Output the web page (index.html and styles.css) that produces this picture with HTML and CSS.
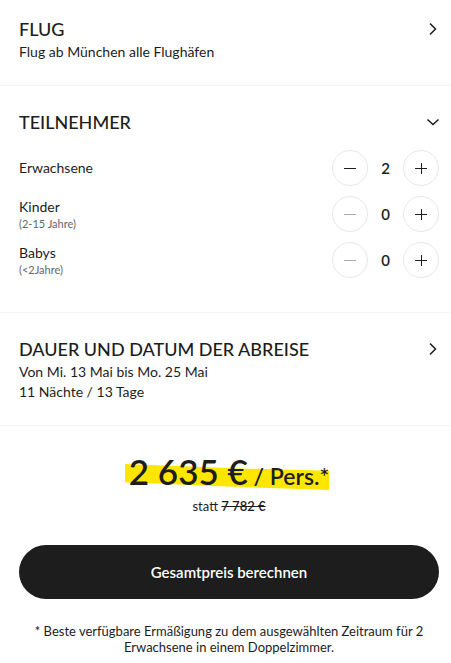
FILE: index.html
```html
<!DOCTYPE html>
<html lang="de">
<head>
    <meta charset="utf-8">
    <title>Gesamtpreis berechnen</title>
    <meta name="viewport" content="width=device-width, initial-scale=1">
    <link rel="stylesheet" href="styles.css">
</head>
<body>

<form class="booking">
    <!-- Flight -->
    <section class="panel">
        <div class="panel-header">
            <h2>FLUG</h2>
            <button type="button" class="toggle" aria-label="Flug ändern">
                <svg width="12" height="14" viewBox="0 0 12 14"><path d="M3 1.5 8.500 7 3 12.500"/></svg>
            </button>
        </div>
        <p>Flug ab München alle Flughäfen</p>
    </section>

    <!-- Travellers -->
    <section class="panel travellers">
        <div class="panel-header">
            <h2>TEILNEHMER</h2>
            <button type="button" class="toggle" aria-label="Teilnehmer schließen">
                <svg width="12" height="14" viewBox="0 0 12 14"><path d="M.5 4.500 6 9.500l5.500-5"/></svg>
            </button>
        </div>
        <div class="row">
            <div class="label">Erwachsene</div>
            <div class="stepper">
                <button type="button" aria-label="Weniger Erwachsene"><svg width="12" height="12"><path d="M0 6.500h12"/></svg></button>
                <output>2</output>
                <button type="button" aria-label="Mehr Erwachsene"><svg width="12" height="12"><path d="M0 6.500h12M6.500 1v11"/></svg></button>
            </div>
        </div>
        <div class="row">
            <div class="label">Kinder <small>(2-15 Jahre)</small></div>
            <div class="stepper">
                <button type="button" aria-label="Weniger Kinder" disabled><svg width="12" height="12"><path d="M0 6.500h12"/></svg></button>
                <output>0</output>
                <button type="button" aria-label="Mehr Kinder"><svg width="12" height="12"><path d="M0 6.500h12M6.500 1v11"/></svg></button>
            </div>
        </div>
        <div class="row">
            <div class="label">Babys <small>(&lt;2Jahre)</small></div>
            <div class="stepper">
                <button type="button" aria-label="Weniger Babys" disabled><svg width="12" height="12"><path d="M0 6.500h12"/></svg></button>
                <output>0</output>
                <button type="button" aria-label="Mehr Babys"><svg width="12" height="12"><path d="M0 6.500h12M6.500 1v11"/></svg></button>
            </div>
        </div>
    </section>

    <!-- Dates -->
    <section class="panel dates">
        <div class="panel-header">
            <h2>DAUER UND DATUM DER ABREISE</h2>
            <button type="button" class="toggle" aria-label="Datum ändern">
                <svg width="12" height="14" viewBox="0 0 12 14"><path d="M3 1.500 8.500 7 3 12.500"/></svg>
            </button>
        </div>
        <p>Von Mi. 13 Mai bis Mo. 25 Mai<br>11 Nächte / 13 Tage</p>
    </section>

    <!-- Price -->
    <section class="summary">
        <div class="price"><strong>2 635 €</strong> / Pers.*</div>
        <div class="old-price">statt <del>7 782 €</del></div>
        <button type="submit" class="submit-btn">Gesamtpreis berechnen</button>
        <p class="note">* Beste verfügbare Ermäßigung zu dem ausgewählten Zeitraum für 2 Erwachsene in einem Doppelzimmer.</p>
    </section>
</form>

</body>
</html>
```
FILE: styles.css
```css
* {
    margin: 0;
    padding: 0;
    box-sizing: border-box;
}

body {
    background: #fff;
    color: #1d1d1d;
    font-family: Lato, "Liberation Sans", sans-serif;
    font-size: 14px;
    line-height: 20px;
}

button {
    font: inherit;
    color: inherit;
    background: none;
    border: none;
    cursor: pointer;
}

svg {
    display: block;
    fill: none;
    stroke: currentColor;
}

/* Panels */
.panel {
    padding: 16px 12px 23px 19px;
    border-bottom: 1px solid #f4f4f4;
}

.panel-header {
    display: flex;
    justify-content: space-between;
    align-items: center;
}

.panel-header h2 {
    font-size: 18px;
    font-weight: 500;
    line-height: 26px;
}

.toggle svg {
    stroke-width: 1.5;
}

/* Travellers */
.travellers {
    padding-top: 23px;
    padding-bottom: 29px;
}

.travellers .panel-header {
    margin-bottom: 10px;
}

.row {
    display: flex;
    justify-content: space-between;
    align-items: center;
    height: 46px;
}

.label small {
    display: block;
    color: #666;
    font-size: 11px;
    line-height: 14px;
}

.stepper {
    display: flex;
    align-items: center;
}

.stepper button {
    display: flex;
    align-items: center;
    justify-content: center;
    width: 36px;
    height: 36px;
    border: 1px solid #e8e8e2;
    border-radius: 50%;
}

.stepper button:disabled {
    color: #aaa;
    cursor: default;
}

.stepper output {
    width: 35px;
    font-size: 15px;
    font-weight: 600;
    text-align: center;
}

/* Dates */
.dates {
    padding-top: 23px;
}

/* Price */
.summary {
    padding: 23px 12px 8px 19px;
    text-align: center;
}

.price {
    position: relative;
    z-index: 0;
    display: inline-block;
    font-size: 23px;
    font-weight: 600;
    line-height: 44px;
}

/* Marker stroke behind the price */
.price::before {
    content: "";
    position: absolute;
    z-index: -1;
    top: 15px;
    left: -4px;
    right: 0;
    height: 26px;
    background: #ffe600;
    clip-path: polygon(0 0, 60% 18%, 100% 26%, 100% 100%, 40% 84%, 0 70%);
}

.price strong {
    font-size: 35px;
    font-weight: 600;
}

.old-price {
    margin-bottom: 31px;
    font-size: 13px;
    line-height: 16px;
}

.old-price del {
    font-weight: 600;
}

.submit-btn {
    display: block;
    width: 100%;
    padding: 17px;
    border-radius: 27px;
    background: #1d1d1d;
    color: #fff;
    font-size: 15px;
    font-weight: 600;
}

.note {
    padding: 0 12px;
    margin-top: 24px;
    font-size: 13px;
    line-height: 16px;
}
```
